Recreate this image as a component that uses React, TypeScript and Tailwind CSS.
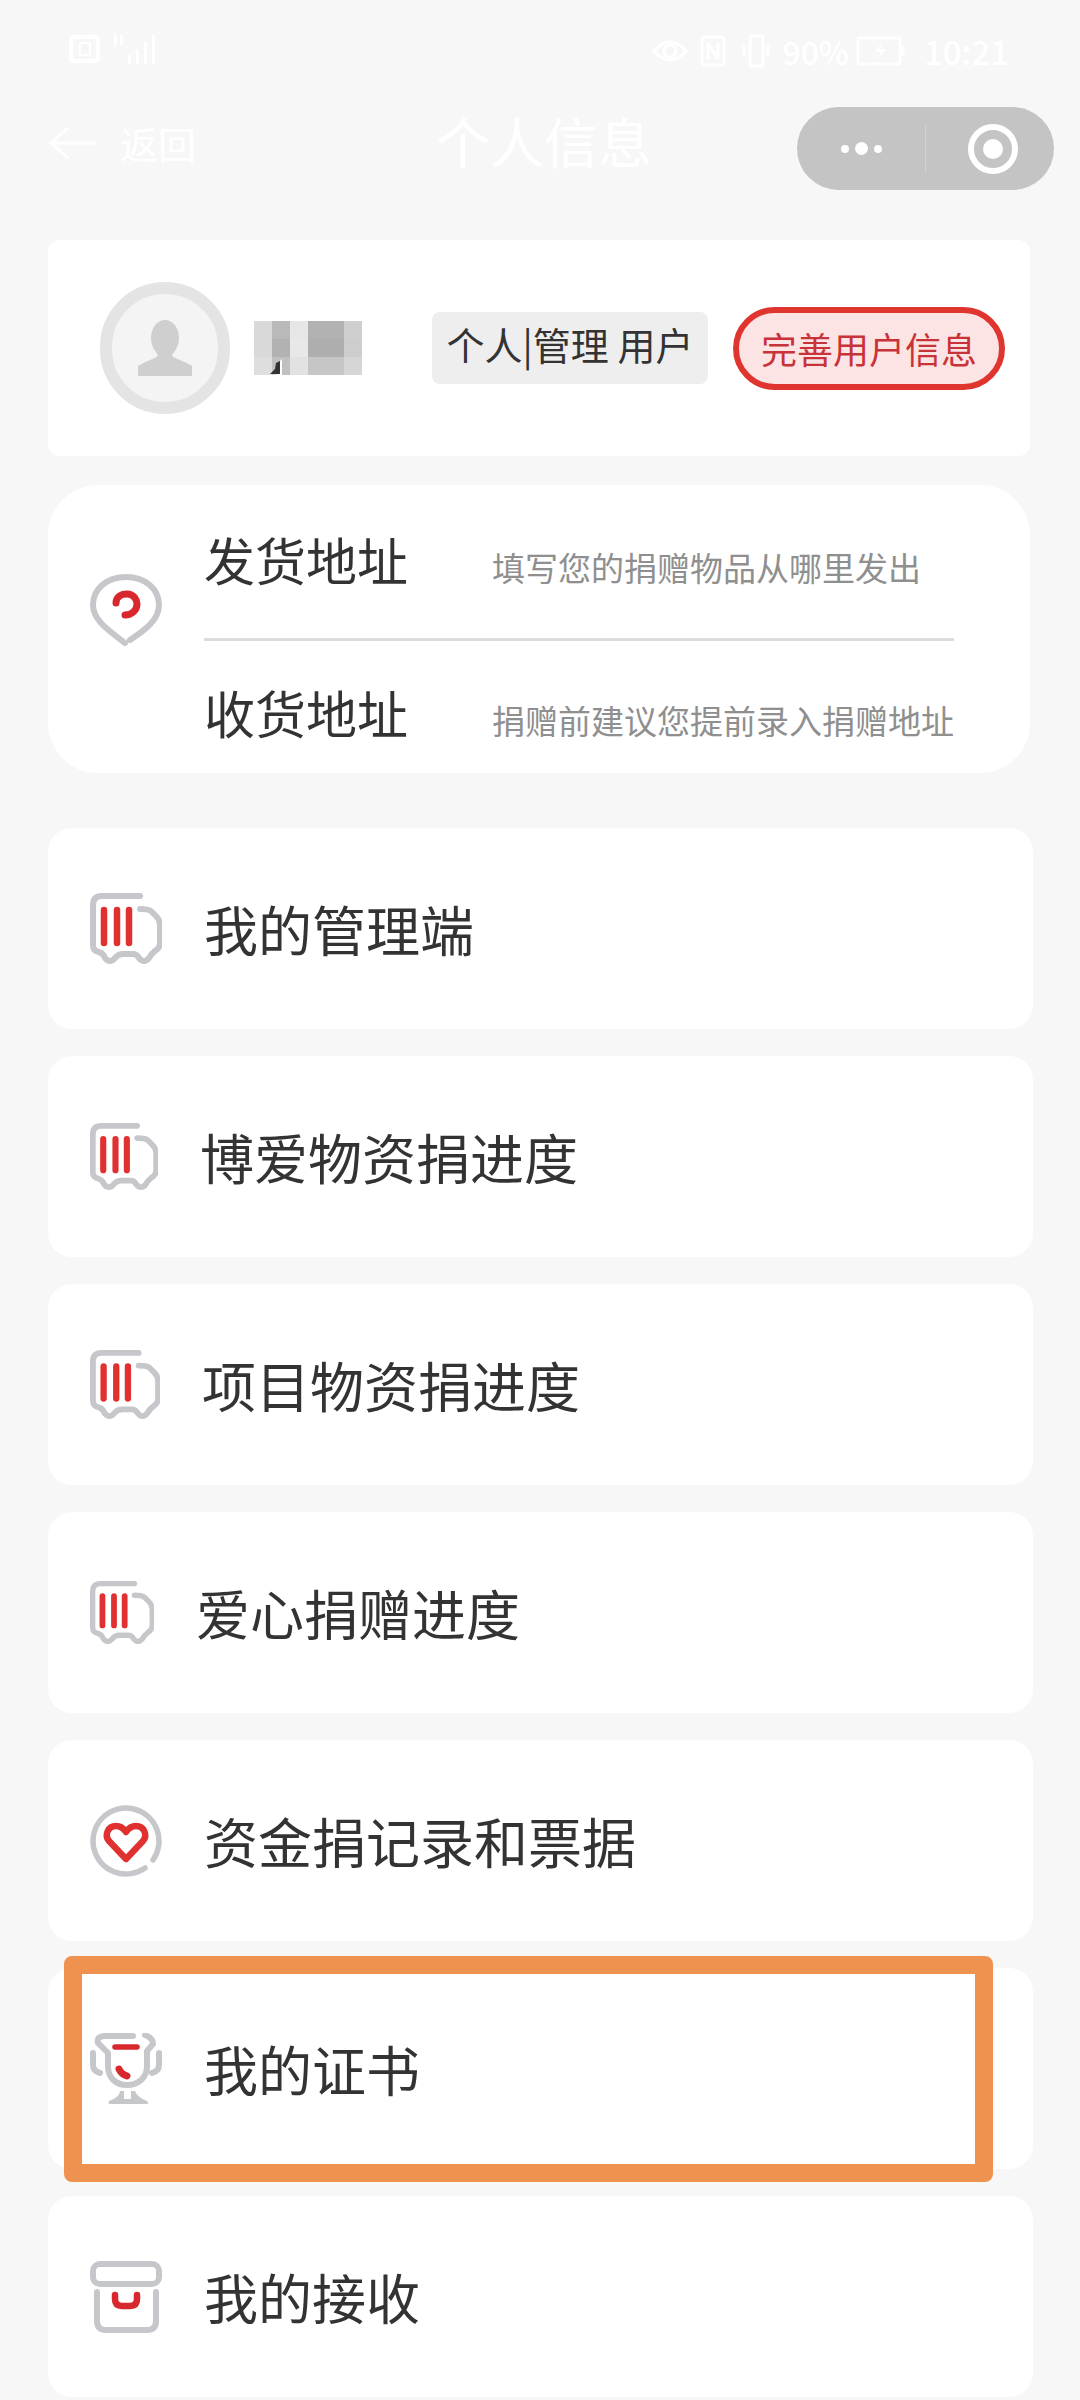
import type { ReactNode } from "react";

const FONT = "font-['Noto_Sans_CJK_SC','Noto_Sans',sans-serif]";

function Truck({ size }: { size: number }) {
  return (
    <svg width={size} height={size} viewBox="0 0 72 72" fill="none" strokeLinecap="round" strokeLinejoin="round">
      <path
        d="M50 3H12Q3 3 3 12V52Q3 58 9 59Q13 60 15 65Q20 71 25 65Q28 61 33 61H43Q47 61 49 65Q54 71 59 65Q61 61 65 58Q70 55 70 50V32Q70 27 66 23L61 18Q58 16 50 16"
        stroke="#c6c7cb"
        strokeWidth="6"
      />
      <path d="M14 17V50M27 17V50M39 17V50" stroke="#e03030" strokeWidth="6.5" />
    </svg>
  );
}

function Pin() {
  return (
    <svg className="mb-[38px]" width="72" height="72" viewBox="0 0 72 72" fill="none" strokeLinecap="round" strokeLinejoin="round">
      <path d="M35 69C18 56 3 46 3 31C3 14 18 3 36 3C54 3 69 14 69 31C69 46 55 56 40 66" stroke="#c6c7cb" strokeWidth="6" />
      <path d="M26 29C26 22 32 20 37 20C44 20 47 26 47 30C47 36 42 41 35 41" stroke="#d8272d" strokeWidth="7" />
    </svg>
  );
}

function HeartBadge() {
  return (
    <svg width="72" height="72" viewBox="0 0 72 72" fill="none" strokeLinecap="round" strokeLinejoin="round">
      <path d="M55 63A33 33 0 1 1 63 55" stroke="#c6c7cb" strokeWidth="5.5" />
      <path
        d="M36 54L19 36C14 30 18 21 26 21C31 21 34 24 36 27C38 24 41 21 46 21C54 21 58 30 53 36Z"
        stroke="#e03030"
        strokeWidth="6.5"
      />
    </svg>
  );
}

function Trophy() {
  return (
    <svg width="72" height="72" viewBox="0 0 72 72" fill="none" strokeLinecap="round" strokeLinejoin="round">
      <path
        d="M43 3H14Q6 4 8 10L18 20V33C18 45 26 52 37 52C48 52 57 45 57 33V18L63 11Q63 5 55 2"
        stroke="#c6c7cb"
        strokeWidth="6"
      />
      <path d="M3 20V32Q3 38 10 40M69 20V32Q69 38 62 40" stroke="#c6c7cb" strokeWidth="6" />
      <path d="M30 58Q30 64 19 68Q17 71 21 71H56Q60 71 57 68Q47 64 45 58L41 58V66H34V58Z" fill="#c6c7cb" />
      <path d="M25 14H47" stroke="#d8272d" strokeWidth="5.5" />
      <path d="M29 36Q31 41 37 43" stroke="#d8272d" strokeWidth="7" />
    </svg>
  );
}

function Box() {
  return (
    <svg width="72" height="72" viewBox="0 0 72 72" fill="none" strokeLinecap="round" strokeLinejoin="round">
      <rect x="3" y="3" width="66" height="20" rx="7" stroke="#c6c7cb" strokeWidth="6" />
      <path d="M7 31V60Q7 69 16 69H57Q66 69 66 60V31" stroke="#c6c7cb" strokeWidth="6" />
      <path d="M25 34V38Q25 45 32 45H40Q47 45 47 38V34" stroke="#d8272d" strokeWidth="6.5" />
    </svg>
  );
}

function StatusBar() {
  return (
    <div className="flex h-[107px] items-start justify-between pl-[69px] pr-[71px] pt-[33px] text-white">
      <div className="flex items-center gap-[14px]">
        <div className="flex h-[28px] w-[31px] items-center justify-center rounded-[5px] border-[4px] border-white">
          <div className="h-[14px] w-[12px] rounded-[3px] border-[2px] border-white" />
        </div>
        <svg width="46" height="32" viewBox="0 0 46 32" fill="white">
          <rect x="0" y="2" width="3" height="10" />
          <rect x="6" y="2" width="3" height="10" />
          <rect x="14" y="22" width="3" height="9" />
          <rect x="22" y="16" width="3" height="15" />
          <rect x="30" y="9" width="3" height="22" />
          <rect x="38" y="2" width="3" height="29" />
        </svg>
      </div>
      <div className="flex items-center">
        <svg width="36" height="36" viewBox="0 0 36 36" fill="none" stroke="white" strokeWidth="3">
          <path d="M2 18Q18 0 34 18Q18 36 2 18Z" />
          <circle cx="18" cy="18" r="6" />
        </svg>
        <svg className="ml-[12px]" width="26" height="32" viewBox="0 0 26 32" fill="none" stroke="white" strokeWidth="3">
          <rect x="2" y="2" width="22" height="28" rx="3" />
          <path d="M8 8V24M8 8L18 24M18 8V24" />
        </svg>
        <svg className="ml-[16px]" width="28" height="34" viewBox="0 0 28 34" fill="none" stroke="white" strokeWidth="3">
          <rect x="8" y="2" width="13" height="30" rx="2" />
          <path d="M2 12V22M26 12V22" />
        </svg>
        <span className={`${FONT} ml-[12px] text-[32px] font-medium leading-[36px]`}>90%</span>
        <svg className="ml-[7px]" width="50" height="30" viewBox="0 0 50 30" fill="none" stroke="white" strokeWidth="3">
          <rect x="2" y="2" width="42" height="26" rx="2" />
          <path d="M47 10V20" />
          <path d="M26 7L19 16H25L22 23L30 13H24Z" fill="white" stroke="none" />
        </svg>
        <span className={`${FONT} ml-[18px] text-[33px] font-medium leading-[36px]`}>10:21</span>
      </div>
    </div>
  );
}

function NavBar() {
  return (
    <div className="relative flex h-[83px] items-center justify-between pl-[48px] pr-[26px] text-white">
      <div className="mb-[12px] flex items-center">
        <svg width="50" height="36" viewBox="0 0 50 36" fill="none" stroke="white" strokeWidth="3">
          <path d="M20 3L3 18L20 33M3 18H48" />
        </svg>
        <span className={`${FONT} ml-[22px] text-[38px] leading-none`}>返回</span>
      </div>
      <span className={`${FONT} absolute left-[436px] top-[-2px] text-[54px] leading-[72px]`}>个人信息</span>
      <div className="flex h-[83px] w-[257px] items-center rounded-full bg-[#c4c4c4]">
        <div className="flex w-[128px] items-center justify-center gap-[6px]">
          <span className="h-[8px] w-[8px] rounded-full bg-white" />
          <span className="h-[13px] w-[13px] rounded-full bg-white" />
          <span className="h-[8px] w-[8px] rounded-full bg-white" />
        </div>
        <div className="h-[48px] w-px bg-[#d2d2d2]" />
        <div className="flex flex-1 items-center justify-center pl-[6px]">
          <div className="flex h-[50px] w-[50px] items-center justify-center rounded-full border-[6px] border-white">
            <span className="h-[20px] w-[20px] rounded-full bg-white" />
          </div>
        </div>
      </div>
    </div>
  );
}

const MOSAIC = [
  "bg-[#d9d9d9]", "bg-[#b9b9b9]", "bg-[#e6e6e6]", "bg-[#b2b2b2]", "bg-[#b2b2b2]", "bg-[#cfcfcf]",
  "bg-[#d9d9d9]", "bg-[#b2b2b2]", "bg-[#e8e8e8]", "bg-[#aeaeae]", "bg-[#aeaeae]", "bg-[#cdcdcd]",
  "bg-[#dedede]", "bg-[#c0c0c0]", "bg-[#e2e2e2]", "bg-[#c6c6c6]", "bg-[#c6c6c6]", "bg-[#d6d6d6]",
];

function ProfileCard() {
  return (
    <div className="mx-[48px] mt-[50px] flex h-[216px] w-[982px] items-center rounded-[12px] bg-white pl-[52px]">
      <div className="flex h-[132px] w-[130px] shrink-0 items-end justify-center rounded-full border-[12px] border-[#e4e4e4] bg-[#f4f4f4] pb-[26px]">
        <svg width="56" height="56" viewBox="0 0 56 56" fill="#cfcfcf">
          <path d="M28 0C20 0 14 8 14 18C14 26 18 31 21 35C21 38 10 40 1 46V56H55V46C46 40 35 38 35 35C38 31 42 26 42 18C42 8 36 0 28 0Z" />
        </svg>
      </div>
      <div className="relative ml-[24px] grid h-[54px] w-[108px] shrink-0 grid-cols-6 grid-rows-3">
        {MOSAIC.map((c, i) => (
          <span key={i} className={c} />
        ))}
        <svg className="absolute left-[16px] top-[38px]" width="12" height="16" viewBox="0 0 12 16">
          <path d="M0 15L5 10L6 4L10 2V15Z" fill="#333333" />
          <path d="M0 16L10 15V2L12 0V16Z" fill="#ffffff" />
        </svg>
      </div>
      <div className={`${FONT} ml-[70px] flex h-[72px] w-[276px] shrink-0 items-center justify-center rounded-[8px] bg-[#eeeeee] pb-[8px] text-[38px] leading-none text-[#333]`}>
        个人|管理 用户
      </div>
      <div className={`${FONT} ml-[25px] flex h-[83px] w-[272px] shrink-0 items-center justify-center rounded-full border-[6px] border-[#e0352f] bg-[#fde4e4] text-[36px] leading-none text-[#c8333a]`}>
        完善用户信息
      </div>
    </div>
  );
}

function AddressLine({ title, hint }: { title: string; hint: string }) {
  return (
    <div className={`${FONT} flex items-baseline text-[#333]`}>
      <span className="w-[288px] text-[51px] leading-[72px]">{title}</span>
      <span className="text-[33px] leading-[40px] text-[#8f8f8f]">{hint}</span>
    </div>
  );
}

function AddressCard() {
  return (
    <div className="mx-[48px] mt-[29px] flex h-[288px] w-[982px] items-center rounded-[50px] bg-white pl-[42px]">
      <Pin />
      <div className="ml-[42px] mt-[12px] flex w-[750px] flex-col">
        <AddressLine title="发货地址" hint="填写您的捐赠物品从哪里发出" />
        <div className="mb-[35px] mt-[43px] h-[3px] bg-[#dcdcdc]" />
        <AddressLine title="收货地址" hint="捐赠前建议您提前录入捐赠地址" />
      </div>
    </div>
  );
}

function Row({ icon, label, overlay }: { icon: ReactNode; label: string; overlay?: boolean }) {
  return (
    <div className="relative ml-[48px] flex h-[201px] w-[985px] items-center gap-[42px] rounded-[24px] bg-white pl-[42px]">
      {icon}
      <span className={`${FONT} relative z-10 text-[54px] leading-none text-[#333]`}>{label}</span>
      {overlay && (
        <div className="absolute left-[16px] top-[-12px] h-[226px] w-[929px] rounded-[8px] border-[18px] border-[#ef9250]" />
      )}
    </div>
  );
}

export default function App() {
  return (
    <div className="h-[2400px] w-[1080px] overflow-hidden bg-[#f7f7f7]">
      <StatusBar />
      <NavBar />
      <ProfileCard />
      <AddressCard />
      <div className="mt-[55px] flex flex-col gap-[27px]">
        <Row icon={<Truck size={72} />} label="我的管理端" />
        <Row icon={<Truck size={68} />} label="博爱物资捐进度" />
        <Row icon={<Truck size={70} />} label="项目物资捐进度" />
        <Row icon={<Truck size={64} />} label="爱心捐赠进度" />
        <Row icon={<HeartBadge />} label="资金捐记录和票据" />
        <Row icon={<Trophy />} label="我的证书" overlay />
        <Row icon={<Box />} label="我的接收" />
      </div>
    </div>
  );
}
